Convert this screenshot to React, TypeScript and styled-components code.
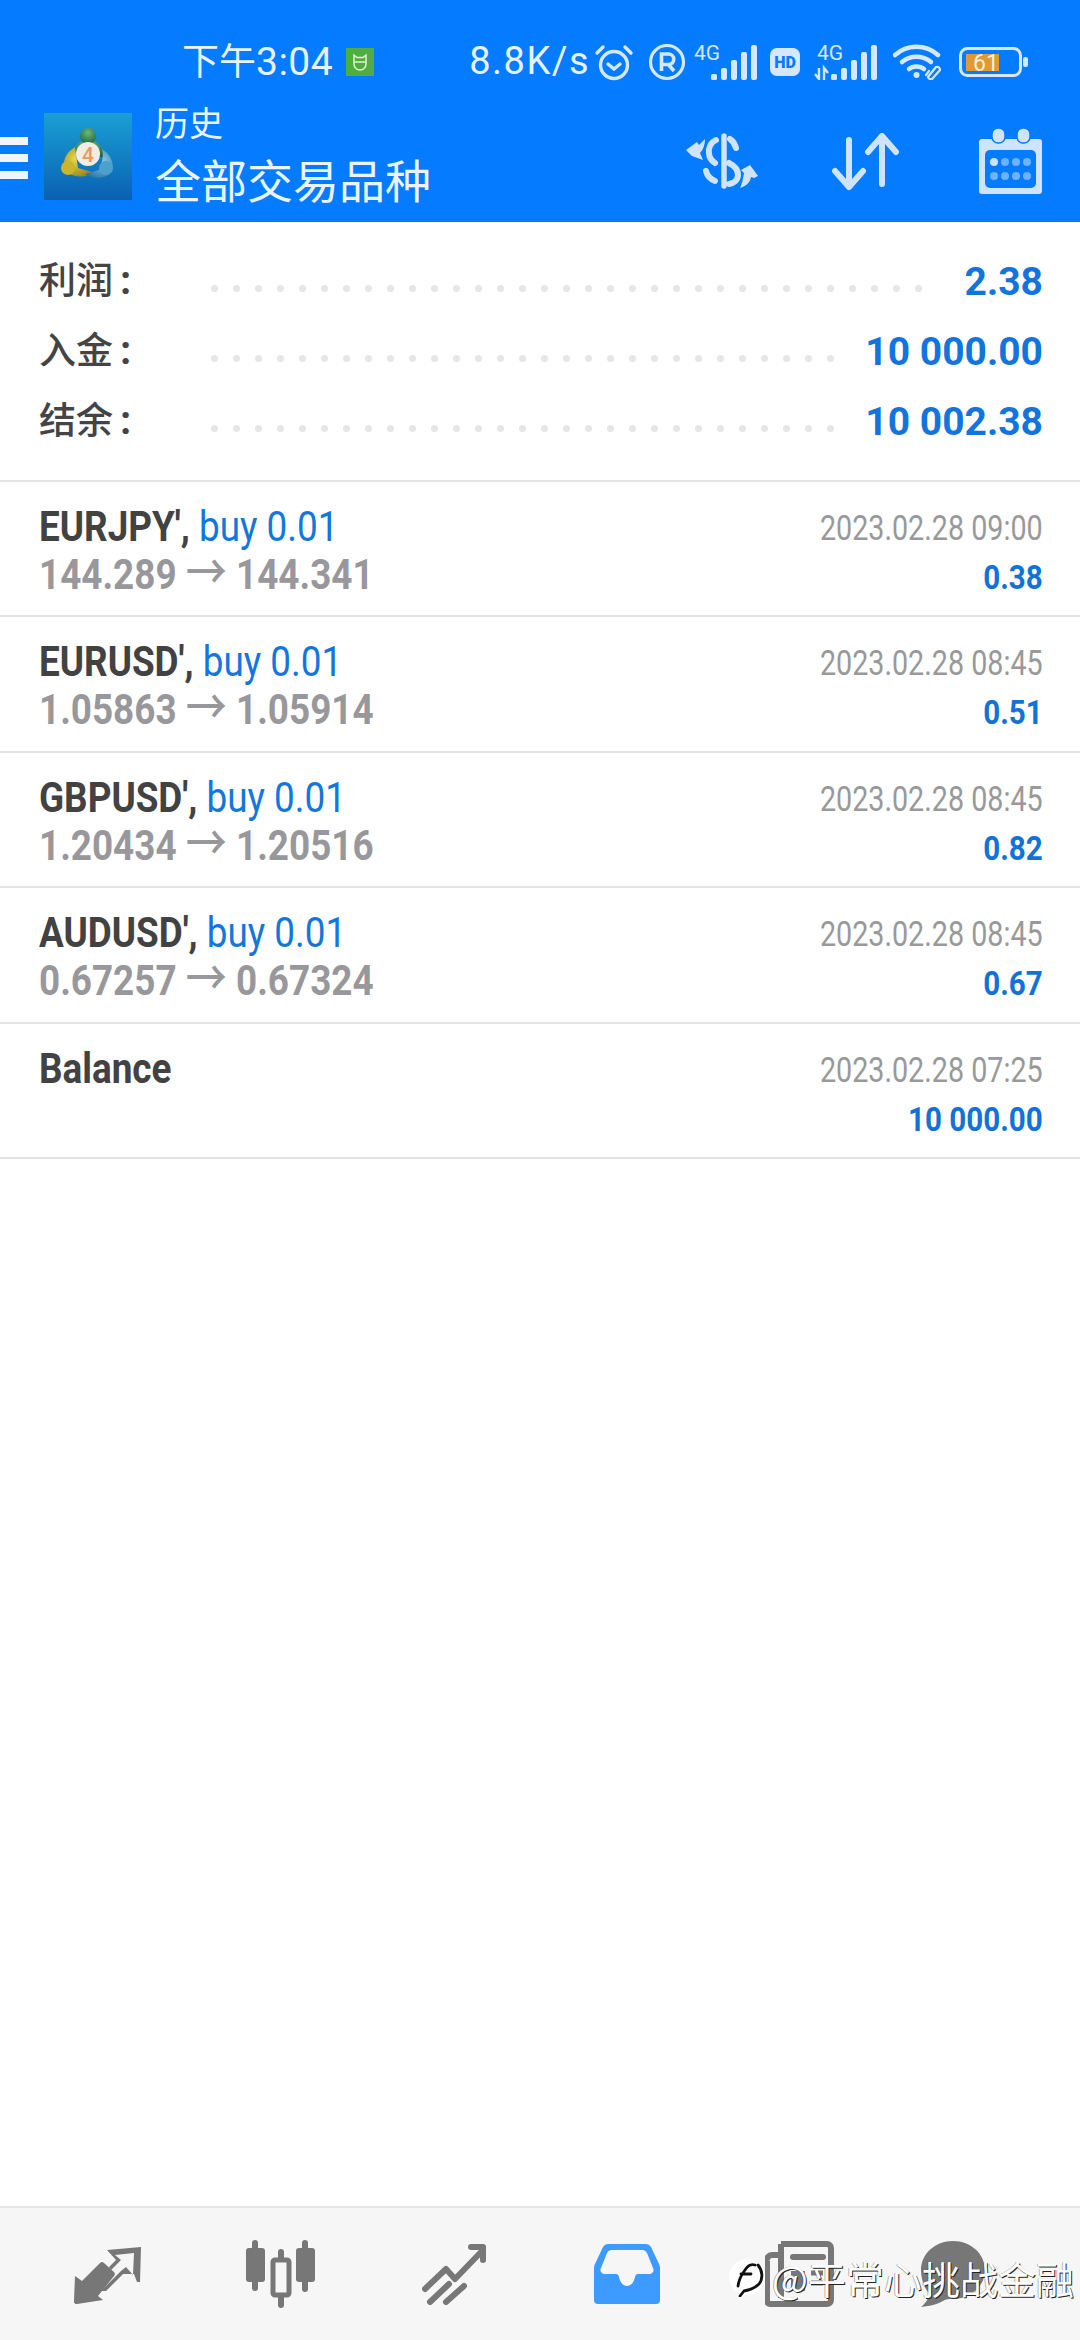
import styled, { createGlobalStyle } from "styled-components";

const GlobalStyle = createGlobalStyle`
  html, body {
    margin: 0;
    padding: 0;
    background: #fff;
  }
  body {
    font-family: Roboto, "Noto Sans CJK SC", sans-serif;
  }
`;

const Page = styled.div`
  position: relative;
  width: 1080px;
  height: 2340px;
  display: flex;
  flex-direction: column;
  overflow: hidden;
`;

const Head = styled.header`
  height: 222px;
  flex: none;
  background: #057bff;
  color: #e6f2ff;
`;

const StatusBar = styled.div`
  height: 106px;
  box-sizing: border-box;
  padding: 18px 0 0 182px;
  display: flex;
  align-items: center;
`;

const Clock = styled.span`
  flex: none;
  margin-bottom: 4px;
  font-family: "Noto Sans CJK SC", sans-serif;
  font-size: 37px;
  line-height: 44px;
  white-space: nowrap;
  b {
    font-family: Roboto, sans-serif;
    font-weight: 400;
    font-size: 39px;
    letter-spacing: 0.5px;
  }
`;

const AppBadge = styled.span`
  flex: none;
  width: 28px;
  height: 28px;
  margin-left: 13px;
  background: #4fae3f;
  display: flex;
  align-items: center;
  justify-content: center;
`;

const Speed = styled.span`
  flex: none;
  margin: 0 4px 2px 95px;
  font-size: 38px;
  line-height: 44px;
  letter-spacing: 1.5px;
  white-space: nowrap;
`;

const Glyph = styled.svg<{ $gap: number }>`
  flex: none;
  margin-left: ${(p) => p.$gap}px;
  color: #d6e8ff;
`;

const ToolBar = styled.div`
  height: 116px;
  box-sizing: border-box;
  padding-top: 7px;
  display: flex;
  align-items: flex-start;
`;

const Burger = styled.div`
  width: 28px;
  margin-top: 24px;
  display: flex;
  flex-direction: column;
  gap: 9px;
  i {
    display: block;
    height: 8px;
    background: #eef6ff;
  }
`;

const Titles = styled.div`
  margin-left: 23px;
  width: 531px;
  font-family: "Noto Sans CJK SC", sans-serif;
  color: #e9f4ff;
`;

const Subtitle = styled.div`
  font-size: 34px;
  line-height: 36px;
  margin-top: -9px;
`;

const Title = styled.div`
  font-size: 46px;
  line-height: 46px;
  margin-top: 15px;
`;

const Logo = styled.svg`
  flex: none;
  margin-left: 16px;
`;

const ToolIcon = styled.svg<{ $left: number; $top: number }>`
  flex: none;
  margin-left: ${(p) => p.$left}px;
  margin-top: ${(p) => p.$top}px;
  color: #cfe3fb;
`;

const Summary = styled.section`
  height: 260px;
  flex: none;
  box-sizing: border-box;
  padding: 23px 37px 0 39px;
  border-bottom: 2px solid #e4e4e4;
`;

const SummaryRow = styled.div`
  height: 70px;
  display: flex;
  align-items: center;
`;

const SummaryLabel = styled.span`
  width: 172px;
  flex: none;
  margin-bottom: 5px;
  font-family: "Noto Sans CJK SC", sans-serif;
  font-size: 37px;
  font-weight: 500;
  color: #444;
  b {
    margin-left: 7px;
    font-family: Roboto, sans-serif;
    font-size: 40px;
    font-weight: 700;
  }
`;

const Leader = styled.div`
  display: flex;
  gap: 15px;
  padding-top: 17px;
`;

const Dot = styled.i`
  width: 7px;
  height: 7px;
  border-radius: 50%;
  background: #e6e6e6;
`;

const SummaryValue = styled.span`
  margin-left: auto;
  padding-top: 4px;
  font-size: 39px;
  font-weight: 700;
  color: #1274dd;
  white-space: nowrap;
`;

const Deal = styled.article`
  height: 135.4px;
  flex: none;
  box-sizing: border-box;
  padding: 20px 37px 0 39px;
  border-bottom: 2px solid #e4e4e4;
  display: flex;
  justify-content: space-between;
`;

const DealInfo = styled.div`
  transform: scaleX(0.857);
  transform-origin: left center;
  white-space: nowrap;
`;

const DealLine = styled.div`
  font-size: 43px;
  line-height: 48px;
  height: 48px;
`;

const Symbol = styled.span`
  font-weight: 700;
  color: #424242;
`;

const Side = styled.span`
  color: #1277dd;
`;

const Prices = styled.span`
  font-weight: 700;
  color: #98989c;
  .arrow {
    font-size: 48px;
    font-weight: 500;
    line-height: 0;
    font-family: "Noto Sans CJK SC", sans-serif;
  }
`;

const DealMeta = styled.div`
  margin-top: 3px;
  text-align: right;
  white-space: nowrap;
`;

const DealDate = styled.div`
  font-size: 35px;
  line-height: 48px;
  color: #999;
  transform: scaleX(0.82);
  transform-origin: right center;
`;

const DealAmount = styled.div`
  font-size: 34px;
  line-height: 48px;
  font-weight: 700;
  color: #1272d8;
  transform: scaleX(0.87);
  transform-origin: right center;
`;

const Spacer = styled.div`
  flex: 1;
`;

const NavBar = styled.nav`
  height: 134px;
  flex: none;
  box-sizing: border-box;
  border-top: 2px solid #e6e6e6;
  background: #f6f6f6;
  padding-left: 21px;
  display: grid;
  grid-template-columns: repeat(5, 173px) 1fr;
  align-items: center;
`;

const NavItem = styled.div<{ $active?: boolean; $shift?: number }>`
  display: flex;
  justify-content: center;
  color: ${(p) => (p.$active ? "#3d9bff" : "#777")};
  padding-right: ${(p) => p.$shift ?? 0}px;
`;

// account tag that sits over the tab bar
const Tag = styled.div`
  position: absolute;
  left: 728px;
  top: 2257px;
  display: flex;
  align-items: center;
  font-family: "Noto Sans CJK SC", sans-serif;
  font-size: 38px;
  font-weight: 400;
  line-height: 42px;
  color: #fff;
  text-shadow: 1px 1px 0 #222, -1px 0 0 rgba(40, 40, 40, 0.35);
  white-space: nowrap;
`;

const deals = [
  { symbol: "EURJPY", open: "144.289", close: "144.341", date: "2023.02.28 09:00", amount: "0.38" },
  { symbol: "EURUSD", open: "1.05863", close: "1.05914", date: "2023.02.28 08:45", amount: "0.51" },
  { symbol: "GBPUSD", open: "1.20434", close: "1.20516", date: "2023.02.28 08:45", amount: "0.82" },
  { symbol: "AUDUSD", open: "0.67257", close: "0.67324", date: "2023.02.28 08:45", amount: "0.67" },
];

const totals = [
  { label: "利润", dots: 33, value: "2.38" },
  { label: "入金", dots: 29, value: "10 000.00" },
  { label: "结余", dots: 29, value: "10 002.38" },
];

const Bars = () => (
  <g fill="currentColor">
    <rect x="17" y="30" width="6" height="6" rx="1.5" />
    <rect x="27" y="24" width="6" height="12" rx="2" />
    <rect x="37" y="16" width="6" height="20" rx="2" />
    <rect x="47" y="8" width="6" height="28" rx="2" />
    <rect x="57" y="1" width="6" height="35" rx="2" />
  </g>
);

const StatusGlyphs = () => (
  <>
    <Glyph $gap={0} width="40" height="37" viewBox="0 0 40 37" fill="none" stroke="currentColor" strokeWidth="3.4" strokeLinecap="round">
      <circle cx="20" cy="21" r="13.5" />
      <path d="M14 20l6 5 6-5" />
      <path d="M3 9l6-6M37 9l-6-6" />
    </Glyph>
    <Glyph $gap={14} width="38" height="38" viewBox="0 0 38 38" fill="none" stroke="currentColor" strokeWidth="3.2">
      <circle cx="19" cy="19" r="16.5" />
      <path d="M13.5 28V11h7a5 5 0 010 10.500h-7M20 21l6 7" strokeWidth="3.6" />
    </Glyph>
    <Glyph $gap={8} width="64" height="36" viewBox="0 0 64 36">
      <text x="0" y="16" fontFamily="Roboto, sans-serif" fontSize="21" fill="currentColor">4G</text>
      <Bars />
    </Glyph>
    <Glyph $gap={12} width="30" height="28" viewBox="0 0 30 28">
      <rect width="30" height="28" rx="7" fill="currentColor" />
      <text x="15" y="20" textAnchor="middle" fontFamily="Roboto, sans-serif" fontWeight="900" fontSize="16" fill="#057bff">HD</text>
    </Glyph>
    <Glyph $gap={14} width="65" height="36" viewBox="0 0 65 36">
      <text x="3" y="16" fontFamily="Roboto, sans-serif" fontSize="21" fill="currentColor">4G</text>
      <path d="M5 24v11M1 30l4 5 0-11M10 36V24l4 5" stroke="currentColor" strokeWidth="2.4" fill="none" />
      <Bars />
    </Glyph>
    <Glyph $gap={14} width="50" height="36" viewBox="0 0 50 36" fill="none" stroke="currentColor" strokeLinecap="round">
      <path d="M2 11c12-11 31-11 43 0" strokeWidth="4.5" />
      <path d="M9 18c8-7 21-7 29 0" strokeWidth="4.5" />
      <path d="M16 25c4-3.500 11-3.500 15 0" strokeWidth="4.500" />
      <circle cx="23.500" cy="31" r="3" fill="currentColor" stroke="none" />
      <path d="M35 33l8-10a3 3 0 014 3l-8 9a3 3 0 01-4-2zM36 27l-3 4" strokeWidth="2.200" />
    </Glyph>
    <Glyph $gap={16} width="69" height="30" viewBox="0 0 69 30">
      <rect x="1.500" y="1.500" width="60" height="27" rx="7" fill="none" stroke="currentColor" strokeWidth="3" />
      <rect x="7" y="7" width="33" height="17" fill="#de9a34" />
      <rect x="64" y="10" width="5" height="10" rx="2" fill="currentColor" />
      <text x="27" y="24" textAnchor="middle" fontFamily="Roboto, sans-serif" fontSize="23" fill="#f6eeda">61</text>
    </Glyph>
  </>
);

const AppLogo = () => (
  <Logo width="88" height="87" viewBox="0 0 88 87">
    <defs>
      <linearGradient id="tile" x1="0" y1="0" x2="0" y2="1">
        <stop offset="0" stopColor="#1aa0d4" />
        <stop offset="1" stopColor="#0a60b2" />
      </linearGradient>
      <radialGradient id="green" cx="0.5" cy="0.3" r="0.8">
        <stop offset="0" stopColor="#6fb67a" />
        <stop offset="1" stopColor="#155f38" />
      </radialGradient>
      <radialGradient id="gold" cx="0.4" cy="0.4" r="0.8">
        <stop offset="0" stopColor="#e8d84a" />
        <stop offset="1" stopColor="#8a7514" />
      </radialGradient>
      <radialGradient id="aqua" cx="0.6" cy="0.4" r="0.8">
        <stop offset="0" stopColor="#8ccbe4" />
        <stop offset="1" stopColor="#17689f" />
      </radialGradient>
    </defs>
    <rect width="88" height="87" fill="url(#tile)" />
    <path d="M44 26c10 2 15 8 17 18H27c2-10 7-16 17-18z" fill="url(#green)" />
    <circle cx="44" cy="23" r="8" fill="url(#green)" />
    <path d="M31 34c-8 5-12 12-11 19 2 9 14 13 24 9 2-1 3-2 4-3l-14-4z" fill="url(#gold)" />
    <circle cx="24" cy="55" r="7" fill="#c9b52e" />
    <path d="M58 36c8 5 11 12 11 19-2 9-13 12-24 8l-4-2 14-4c3-6 5-13 3-21z" fill="url(#aqua)" />
    <circle cx="62" cy="55" r="7" fill="#4ba0cc" />
    <circle cx="44" cy="41" r="12" fill="#f1ece4" />
    <text x="44" y="49" textAnchor="middle" fontFamily="Roboto, sans-serif" fontWeight="500" fontSize="21" fill="#ee9a5e">4</text>
  </Logo>
);

const ExchangeIcon = () => (
  <ToolIcon $left={0} $top={20} width="73" height="56" viewBox="0 0 73 56" fill="none" stroke="currentColor" strokeLinecap="round">
    <path d="M38 3v50" strokeWidth="5.500" />
    <path d="M30 7c-5 2-8 8-7 13 0 4 3 8 6 10" strokeWidth="6" />
    <path d="M44 6c3 2 5 5 6 9" strokeWidth="6" />
    <path d="M43 30c6 3 9 7 9 12s-4 8-9 9" strokeWidth="6" />
    <path d="M20 38c1 4 4 8 9 10" strokeWidth="6" />
    <path d="M0 17L11 9l2 3c2-2 4-4 6-6 0 6-2 11-5 14l3 7-11-4z" fill="currentColor" stroke="none" />
    <path d="M72 43L64 32l-9 5 3 3c-1 6-2 11-4 15 6-2 10-5 11-11l3 1z" fill="currentColor" stroke="none" />
  </ToolIcon>
);

const SortIcon = () => (
  <ToolIcon $left={73} $top={20} width="68" height="58" viewBox="0 0 68 58" fill="none" stroke="currentColor" strokeWidth="6" strokeLinecap="round" strokeLinejoin="round">
    <path d="M17 7v47M3 38l14 16 14-16" />
    <path d="M50 51V3M36 19L50 3l14 16" />
  </ToolIcon>
);

const CalendarIcon = () => (
  <ToolIcon $left={79} $top={15} width="63" height="66" viewBox="0 0 63 66">
    <path d="M3 11h57a3 3 0 013 3v49a3 3 0 01-3 3H3a3 3 0 01-3-3V14a3 3 0 013-3z" fill="currentColor" />
    <rect x="6" y="22" width="51" height="38" rx="5" fill="#057bff" />
    <rect x="13" y="0" width="13" height="15" rx="6" fill="currentColor" stroke="#057bff" strokeWidth="1.500" />
    <rect x="38" y="0" width="13" height="15" rx="6" fill="currentColor" stroke="#057bff" strokeWidth="1.500" />
    {[15, 26, 37, 48].map((x, i) => (
      <g key={x}>
        <circle cx={x} cy="34" r="4" fill={i === 0 ? "#cfe3fb" : "#6db2fb"} />
        <circle cx={x} cy="48" r="4" fill="#6db2fb" />
      </g>
    ))}
  </ToolIcon>
);

const QuotesTab = () => (
  <svg width="67" height="60" viewBox="0 0 67 60" fill="currentColor">
    <path d="M1 32l7 5 18-18a3 3 0 014 0l10 9a3 3 0 010 4L24 52l5 4-26 4a2.500 2.500 0 01-3-3z" />
    <path d="M33 6l34-3-1 35-3 0-3-8-11-0-17 17-5 0 20-20 5-4 7 8 1-22-19 2 6 5-10 10-2-3 7-7z" />
  </svg>
);

const ChartTab = () => (
  <svg width="70" height="68" viewBox="0 0 70 68" fill="currentColor">
    <rect x="0" y="8" width="19" height="34" rx="3" />
    <rect x="6" y="0" width="6" height="51" rx="3" />
    <rect x="50" y="8" width="19" height="34" rx="3" />
    <rect x="56" y="0" width="6" height="52" rx="3" />
    <rect x="32" y="9" width="6" height="59" rx="3" />
    <rect x="27" y="20" width="16" height="35" rx="2" fill="#f6f6f6" stroke="currentColor" strokeWidth="5" />
  </svg>
);

const TradeTab = () => (
  <svg width="64" height="61" viewBox="0 0 64 61" fill="none" stroke="currentColor" strokeWidth="6" strokeLinecap="round" strokeLinejoin="round">
    <path d="M3 45l21-20 9 10 28-29" />
    <path d="M49 3h12v13" />
    <path d="M8 58l19-18M24 58l18-16" />
  </svg>
);

const HistoryTab = () => (
  <svg width="66" height="60" viewBox="0 0 66 60" fill="currentColor">
    <path d="M14 0h38a6 6 0 015 3l8 17a8 8 0 011 4v32a4 4 0 01-4 4H4a4 4 0 01-4-4V24a8 8 0 011-4L9 3a6 6 0 015-3zm3 6a5 5 0 00-4 3L7 24a4 4 0 003 6h12c2 0 3 2 3 3 1 5 4 9 8 9s7-4 8-9c0-1 1-3 3-3h12a4 4 0 003-6L53 9a5 5 0 00-4-3z" fillRule="evenodd" />
  </svg>
);

const JournalTab = () => (
  <svg width="69" height="66" viewBox="0 0 69 66" fill="none" stroke="currentColor">
    <path d="M16 3h46a4 4 0 014 4v52a4 4 0 01-4 4H5a3 3 0 01-3-3V20" strokeWidth="6" />
    <path d="M16 3v54" strokeWidth="6" />
    <path d="M2 20a5 5 0 015-6h7" strokeWidth="6" />
    <path d="M28 16h30" strokeWidth="6" strokeLinecap="round" />
    <rect x="26" y="30" width="14" height="20" fill="currentColor" stroke="none" />
    <path d="M46 32h12M46 42h12" strokeWidth="5" />
  </svg>
);

const ChatTab = () => (
  <svg width="64" height="66" viewBox="0 0 64 66" fill="currentColor">
    <path d="M32 0c18 0 32 13 32 29S50 58 32 58c-4 0-7 0-10 2-5 3-12 5-22 6 5-4 8-9 8-14C3 47 0 38 0 29 0 13 14 0 32 0z" />
  </svg>
);

const NoteMark = () => (
  <svg width="44" height="38" viewBox="0 0 44 38">
    <ellipse cx="19" cy="18" rx="18" ry="18" fill="#fff" />
    <path d="M10 27c1-8 4-12 7-16 3-5 7-6 10-5M13 15h10M30 6c5 6 5 14 1 19-4 4-9 6-15 7l-4 5" fill="none" stroke="#111" strokeWidth="2.800" strokeLinecap="round" />
  </svg>
);

const App = () => {
  return (
    <Page>
      <GlobalStyle />
      <Head>
        <StatusBar>
          <Clock>
            下午<b>3:04</b>
          </Clock>
          <AppBadge>
            <svg width="18" height="18" viewBox="0 0 18 18" fill="none" stroke="#dff2d4" strokeWidth="1.500">
              <path d="M3 2l3 2.500h6L15 2v9a6 6 0 01-12 0zM3 9h12" />
            </svg>
          </AppBadge>
          <Speed>8.8K/s</Speed>
          <StatusGlyphs />
        </StatusBar>
        <ToolBar>
          <Burger>
            <i />
            <i />
            <i />
          </Burger>
          <AppLogo />
          <Titles>
            <Subtitle>历史</Subtitle>
            <Title>全部交易品种</Title>
          </Titles>
          <ExchangeIcon />
          <SortIcon />
          <CalendarIcon />
        </ToolBar>
      </Head>

      <Summary>
        {totals.map((row) => (
          <SummaryRow key={row.label}>
            <SummaryLabel>
              {row.label}
              <b>:</b>
            </SummaryLabel>
            <Leader>
              {Array.from({ length: row.dots }, (_, i) => (
                <Dot key={i} />
              ))}
            </Leader>
            <SummaryValue>{row.value}</SummaryValue>
          </SummaryRow>
        ))}
      </Summary>

      {deals.map((deal) => (
        <Deal key={deal.symbol}>
          <DealInfo>
            <DealLine>
              <Symbol>{deal.symbol}',</Symbol> <Side>buy 0.01</Side>
            </DealLine>
            <DealLine>
              <Prices>
                {deal.open} <span className="arrow">→</span> {deal.close}
              </Prices>
            </DealLine>
          </DealInfo>
          <DealMeta>
            <DealDate>{deal.date}</DealDate>
            <DealAmount>{deal.amount}</DealAmount>
          </DealMeta>
        </Deal>
      ))}
      <Deal>
        <DealInfo>
          <DealLine>
            <Symbol>Balance</Symbol>
          </DealLine>
        </DealInfo>
        <DealMeta>
          <DealDate>2023.02.28 07:25</DealDate>
          <DealAmount>10 000.00</DealAmount>
        </DealMeta>
      </Deal>

      <Spacer />

      <NavBar>
        <NavItem>
          <QuotesTab />
        </NavItem>
        <NavItem>
          <ChartTab />
        </NavItem>
        <NavItem>
          <TradeTab />
        </NavItem>
        <NavItem $active>
          <HistoryTab />
        </NavItem>
        <NavItem>
          <JournalTab />
        </NavItem>
        <NavItem $shift={60}>
          <ChatTab />
        </NavItem>
      </NavBar>
      <Tag>
        <NoteMark />
        @平常心挑战金融
      </Tag>
    </Page>
  );
};

export default App;
